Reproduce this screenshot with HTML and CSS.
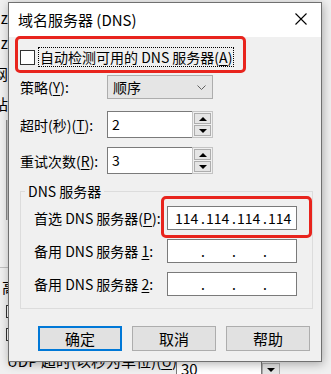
FILE: index.html
```html
<!DOCTYPE html>
<html>
<head>
  <title>域名服务器 (DNS)</title>
  <link rel="stylesheet" href="styles.css">
</head>
<body>
  <div class="backdrop">
    <div class="bg-left">
      <div class="bg-line l1">z</div>
      <div class="bg-line l2">z</div>
      <div class="bg-line l3">网</div>
      <div class="bg-line l4">站</div>
      <div class="bg-bar"></div>
      <div class="bg-rule"></div>
      <div class="bg-line l5 start">高</div>
      <div class="bg-check c1"></div>
      <div class="bg-check c2"></div>
    </div>
    <div class="bg-bottom">
      <span class="bg-label">UDP 超时(以秒为单位)(<u>U</u>):</span>
      <span class="bg-field">30</span>
      <span class="bg-spin"><i class="tri-down"></i></span>
    </div>
  </div>

  <div class="dialog">
    <div class="titlebar">
      <span class="title">域名服务器 (DNS)</span>
      <svg class="close" width="12" height="12" viewBox="0 0 12 12">
        <path d="M0.5 0.5 L11.5 11.5 M11.5 0.5 L0.5 11.5" stroke="#000" stroke-width="1.1" fill="none"/>
      </svg>
    </div>

    <div class="content">
      <div class="auto">
        <span class="checkbox"></span>
        <span class="focus">自动检测可用的 DNS 服务器(<u>A</u>)</span>
      </div>

      <div class="form">
        <div class="field-row r1">
          <span class="lbl">策略(<u>Y</u>):</span>
          <div class="select">
            <span>顺序</span>
            <svg width="9" height="5" viewBox="0 0 9 5"><path d="M0.5 0.5 L4.5 4.5 L8.5 0.5" stroke="#606060" fill="none"/></svg>
          </div>
        </div>
        <div class="field-row r2">
          <span class="lbl">超时(秒)(<u>T</u>):</span>
          <div class="spin">
            <div class="spin-input">2</div>
            <div class="spin-btns">
              <span class="sbtn"><i class="tri-up"></i></span>
              <span class="sbtn"><i class="tri-down"></i></span>
            </div>
          </div>
        </div>
        <div class="field-row r3">
          <span class="lbl">重试次数(<u>R</u>):</span>
          <div class="spin">
            <div class="spin-input">3</div>
            <div class="spin-btns">
              <span class="sbtn"><i class="tri-up"></i></span>
              <span class="sbtn"><i class="tri-down"></i></span>
            </div>
          </div>
        </div>
      </div>

      <fieldset class="group">
        <legend>DNS 服务器</legend>
        <div class="ip-row first">
          <span class="ip-lbl">首选 DNS 服务器(<u>P</u>):</span>
          <div class="ip">
            <span class="ip-num">114</span><span class="ip-dot">.</span>
            <span class="ip-num">114</span><span class="ip-dot">.</span>
            <span class="ip-num">114</span><span class="ip-dot">.</span>
            <span class="ip-num">114</span>
          </div>
        </div>
        <div class="ip-row">
          <span class="ip-lbl">备用 DNS 服务器 <u>1</u>:</span>
          <div class="ip">
            <span class="ip-num"></span><span class="ip-dot">.</span>
            <span class="ip-num"></span><span class="ip-dot">.</span>
            <span class="ip-num"></span><span class="ip-dot">.</span>
            <span class="ip-num"></span>
          </div>
        </div>
        <div class="ip-row">
          <span class="ip-lbl">备用 DNS 服务器 <u>2</u>:</span>
          <div class="ip">
            <span class="ip-num"></span><span class="ip-dot">.</span>
            <span class="ip-num"></span><span class="ip-dot">.</span>
            <span class="ip-num"></span><span class="ip-dot">.</span>
            <span class="ip-num"></span>
          </div>
        </div>
      </fieldset>

      <div class="buttons">
        <button class="btn btn-default">确定</button>
        <button class="btn">取消</button>
        <button class="btn">帮助</button>
      </div>
    </div>

    <div class="mark mark-auto"></div>
    <div class="mark mark-dns"></div>
  </div>
</body>
</html>
```

FILE: styles.css
```css
body {
  margin: 0;
  width: 331px;
  height: 374px;
  overflow: hidden;
  position: relative;
  background: #f0f0f0;
  font-family: "Noto Sans CJK SC", "Noto Sans", sans-serif;
  font-size: 14px;
  color: #000;
}

u {
  text-underline-offset: 2px;
}

/* window behind the dialog */
.backdrop {
  height: 374px;
  display: flex;
  flex-direction: column;
}
.bg-left {
  width: 8px;
  overflow: hidden;
  padding-top: 8px;
  font-size: 15px;
}
.bg-line {
  height: 20px;
  line-height: 20px;
  display: flex;
  justify-content: flex-end;
  white-space: nowrap;
}
.bg-line.start {
  justify-content: flex-start;
  padding-left: 2px;
}
.l2 { margin-top: 5px; }
.l3 { margin-top: 11px; }
.l4 { margin-top: 10px; }
.l5 { margin-top: 9px; }
.bg-bar {
  margin: 6px 0 0 6px;
  width: 1px;
  height: 100px;
  border-left: 1px solid #8c8c8c;
  background: #c8c8c8;
}
.bg-rule {
  margin-top: 47px;
  height: 1px;
  background: #c0c0c0;
}
.bg-check {
  margin-left: 6px;
  width: 10px;
  height: 11px;
  border: 1px solid #333;
  background: #fff;
}
.c1 { margin-top: 8px; }
.c2 { margin-top: 10px; }

.bg-bottom {
  margin-top: auto;
  height: 24px;
  display: flex;
  align-items: flex-start;
  padding-left: 7px;
  font-size: 15px;
}
.bg-label {
  width: 169px;
  line-height: 22px;
  white-space: nowrap;
  overflow: hidden;
}
.bg-field {
  margin-top: 11px;
  width: 86px;
  height: 22px;
  box-sizing: border-box;
  border: 1px solid #7a7a7a;
  background: #fff;
  padding-left: 4px;
  line-height: 14px;
}
.bg-spin {
  margin-top: 13px;
  width: 18px;
  height: 14px;
  box-sizing: border-box;
  border: 1px solid #adadad;
  background: #e5e5e5;
  display: flex;
  justify-content: center;
  align-items: center;
}

/* dialog */
.dialog {
  position: absolute;
  left: 8px;
  top: 2px;
  width: 314px;
  height: 360px;
  box-sizing: border-box;
  border: 1px solid #707070;
  background: #f0f0f0;
  box-shadow: 1px 2px 9px rgba(0, 0, 0, 0.3);
}
.titlebar {
  height: 34px;
  background: #fff;
  display: flex;
  align-items: center;
  justify-content: space-between;
  padding: 0 14px 0 9px;
}
.title {
  font-size: 15px;
  line-height: 20px;
}
.close {
  margin-top: -2px;
}

.content {
  padding: 10px 8px 0 11px;
}

.auto {
  display: flex;
  align-items: center;
  height: 20px;
}
.checkbox {
  width: 15px;
  height: 15px;
  box-sizing: border-box;
  border: 1px solid #333;
  background: #fff;
  margin-right: 3px;
}
.focus {
  height: 20px;
  line-height: 18px;
  box-sizing: border-box;
  border: 1px dotted #000;
  padding: 0 1px;
  white-space: nowrap;
}

.form {
  margin-top: 8px;
}
.field-row {
  display: flex;
  align-items: center;
}
.r1 { height: 24px; }
.r2 { height: 27px; margin-top: 12px; }
.r3 { height: 27px; margin-top: 9px; }
.lbl {
  width: 87px;
  line-height: 20px;
  white-space: nowrap;
}
.select {
  width: 106px;
  height: 24px;
  box-sizing: border-box;
  border: 1px solid #adadad;
  background: #e5e5e5;
  display: flex;
  align-items: center;
  justify-content: space-between;
  padding: 0 6px 0 5px;
  line-height: 20px;
}
.spin {
  display: flex;
  width: 106px;
  height: 27px;
}
.spin-input {
  width: 85px;
  box-sizing: border-box;
  border: 1px solid #7a7a7a;
  border-right: none;
  background: #fff;
  padding-left: 4px;
  line-height: 24px;
}
.spin-btns {
  flex: 1;
  display: flex;
  flex-direction: column;
  gap: 1px;
  padding: 1px;
  border: 1px solid #c4c4c4;
  background: #f0f0f0;
}
.sbtn {
  flex: 1;
  border: 1px solid #adadad;
  background: #e5e5e5;
  display: flex;
  align-items: center;
  justify-content: center;
}
.tri-up,
.tri-down {
  width: 0;
  height: 0;
  border-left: 4px solid transparent;
  border-right: 4px solid transparent;
}
.tri-up { border-bottom: 4px solid #000; }
.tri-down { border-top: 4px solid #000; }

.group {
  margin: 7px 0 0 0;
  width: 293px;
  box-sizing: border-box;
  border: 1px solid #dcdcdc;
  padding: 0 0 12px 13px;
}
.group legend {
  margin-left: -9px;
  padding: 0 3px;
  line-height: 20px;
}
.ip-row {
  display: flex;
  align-items: center;
  height: 24px;
  margin-top: 9px;
}
.ip-row.first {
  margin-top: 5px;
}
.ip-lbl {
  width: 133px;
  line-height: 20px;
  white-space: nowrap;
}
.ip {
  width: 130px;
  height: 24px;
  box-sizing: border-box;
  border: 1px solid #7a7a7a;
  background: #fff;
  display: flex;
  align-items: center;
  padding-left: 7px;
  line-height: 20px;
}
.ip-num {
  width: 22px;
  text-align: center;
}
.ip-dot {
  width: 9px;
  box-sizing: border-box;
  padding-left: 4px;
}

.buttons {
  display: flex;
  gap: 10px;
  margin-top: 17px;
  padding-left: 18px;
}
.btn {
  width: 84px;
  height: 25px;
  box-sizing: border-box;
  border: 1px solid #adadad;
  background: #e1e1e1;
  font: inherit;
  font-size: 15px;
  color: #000;
  padding: 0;
  line-height: 21px;
}
.btn-default {
  border: 2px solid #0078d7;
}

/* red annotation frames */
.mark {
  position: absolute;
  box-sizing: border-box;
  border: 3px solid #e8241d;
  border-radius: 5px;
}
.mark-auto {
  left: 6px;
  top: 33px;
  width: 231px;
  height: 37px;
}
.mark-dns {
  left: 152px;
  top: 193px;
  width: 151px;
  height: 42px;
}
```
